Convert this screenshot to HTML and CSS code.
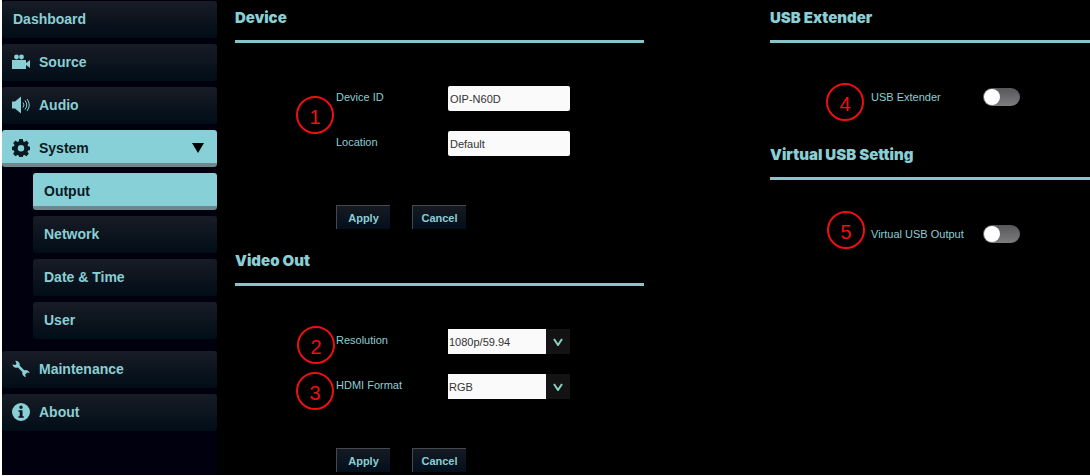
FILE: index.html
```html
<!DOCTYPE html>
<html lang="en">

<head>
    <meta charset="UTF-8">
    <meta name="viewport" content="width=device-width, initial-scale=1.0">
    <title>System - Output</title>
    <link rel="stylesheet" href="styles.css">
</head>

<body>
    <div class="app">
        <nav class="sidebar">
            <a href="#" class="nav-item">Dashboard</a>
            <a href="#" class="nav-item">
                <svg class="icon" viewBox="0 0 18 18"><circle cx="4.500" cy="4" r="2.400"/><circle cx="9.500" cy="4" r="2.400"/><path d="M0 7h14v3l4-3v8l-4-3v4H0z"/></svg>
                Source
            </a>
            <a href="#" class="nav-item">
                <svg class="icon" viewBox="0 0 18 18"><path d="M0 5.500h3l6-5v17l-6-5H0z"/><path class="wave" d="M11 6.500q2 2.500 0 5M13 4.500q3.500 4.500 0 9M15 3q4.500 6 0 12"/></svg>
                Audio
            </a>
            <a href="#" class="nav-item active">
                <svg class="icon" viewBox="0 0 18 18"><path fill-rule="evenodd" d="M7.300 0h3.400l.5 2.300 1.300.6 2-1.300 2.300 2.300-1.300 2 .6 1.400 2.300.4v3.200l-2.300.5-.6 1.400 1.300 2-2.300 2.400-2-1.300-1.300.5-.5 2.300H7.300l-.5-2.300-1.400-.5-2 1.300-2.300-2.400 1.300-2-.5-1.400L0 10.900V7.700l2-.4.500-1.400-1.300-2 2.300-2.300 2 1.300 1.300-.6zM9 6a3.200 3.200 0 1 0 0 6.400A3.200 3.200 0 0 0 9 6z"/></svg>
                System
                <svg class="arrow" viewBox="0 0 12 10"><path d="M0 0h12L6 10z"/></svg>
            </a>
            <div class="submenu">
                <a href="#" class="nav-item active">Output</a>
                <a href="#" class="nav-item">Network</a>
                <a href="#" class="nav-item">Date &amp; Time</a>
                <a href="#" class="nav-item">User</a>
            </div>
            <a href="#" class="nav-item">
                <svg class="icon" viewBox="0 0 18 18"><path d="M3.300.7A4.300 4.300 0 0 1 7.800 5.800L12.200 10.200A4.300 4.300 0 0 1 17.700 13L15.300 12.500 13.200 14.600 13.800 17.200A4.300 4.300 0 0 1 10.300 12L5.900 7.600A4.300 4.300 0 0 1 .4 4.400L3.300 5 4.500 3.600z"/></svg>
                Maintenance
            </a>
            <a href="#" class="nav-item">
                <svg class="icon" viewBox="0 0 18 18"><path fill-rule="evenodd" d="M9 0a9 9 0 1 0 0 18A9 9 0 0 0 9 0zM9 2.600a1.700 1.700 0 1 1 0 3.400 1.700 1.700 0 0 1 0-3.400zM6.500 7.200h4v6h1.300v1.500H6.400v-1.500h1.300V8.700H6.500z"/></svg>
                About
            </a>
        </nav>

        <main class="content">
            <div class="column">
                <form class="panel">
                    <h2>Device</h2>
                    <div class="row">
                        <span class="badge badge1">1</span>
                        <label for="deviceId">Device ID</label>
                        <input type="text" id="deviceId" value="OIP-N60D">
                    </div>
                    <div class="row">
                        <label for="location">Location</label>
                        <input type="text" id="location" value="Default">
                    </div>
                    <div class="buttons">
                        <button type="button">Apply</button>
                        <button type="button">Cancel</button>
                    </div>
                </form>

                <form class="panel">
                    <h2>Video Out</h2>
                    <div class="row">
                        <span class="badge badge2">2</span>
                        <label for="resolution">Resolution</label>
                        <div class="select">
                            <select id="resolution">
                                <option>1080p/59.94</option>
                            </select>
                            <svg class="chevron" viewBox="0 0 10 8"><path d="M1 1l4 6 4-6"/></svg>
                        </div>
                    </div>
                    <div class="row">
                        <span class="badge badge3">3</span>
                        <label for="hdmiFormat">HDMI Format</label>
                        <div class="select">
                            <select id="hdmiFormat">
                                <option>RGB</option>
                            </select>
                            <svg class="chevron" viewBox="0 0 10 8"><path d="M1 1l4 6 4-6"/></svg>
                        </div>
                    </div>
                    <div class="buttons">
                        <button type="button">Apply</button>
                        <button type="button">Cancel</button>
                    </div>
                </form>
            </div>

            <div class="column usb">
                <form class="panel">
                    <h2>USB Extender</h2>
                    <div class="row switch-row">
                        <span class="badge badge4">4</span>
                        <label for="usbExtender">USB Extender</label>
                        <input type="checkbox" class="toggle" id="usbExtender">
                    </div>
                </form>

                <form class="panel">
                    <h2>Virtual USB Setting</h2>
                    <div class="row switch-row">
                        <span class="badge badge5">5</span>
                        <label for="virtualUsb">Virtual USB Output</label>
                        <input type="checkbox" class="toggle" id="virtualUsb">
                    </div>
                </form>
            </div>
        </main>
    </div>
</body>

</html>
```

FILE: styles.css
```css
* {
    box-sizing: border-box;
}

body {
    margin: 0;
    padding: 0 0 1px 2px;
    background-color: #fff;
    font-family: "Liberation Sans", Arial, sans-serif;
    font-size: 11px;
    color: #8acfd5;
}

.app {
    display: flex;
    min-height: calc(100vh - 1px);
    background-color: #000;
}

/* left menu */
.sidebar {
    display: flex;
    flex-direction: column;
    gap: 6px;
    width: 215px;
    flex-shrink: 0;
    padding-top: 1px;
    background-color: #00000f;
}

.nav-item {
    display: flex;
    align-items: center;
    gap: 9px;
    height: 37px;
    padding: 0 13px 2px 11px;
    border-radius: 3px;
    background: linear-gradient(#181c26, #010d17);
    color: #8acfd5;
    font-size: 14px;
    font-weight: bold;
    text-decoration: none;
}

.nav-item.active {
    background: #88d0d8;
    border-bottom: 4px solid #6f878d;
    padding-top: 4px;
    color: #0a1a22;
}

.icon {
    width: 18px;
    height: 18px;
    margin-left: -1px;
    fill: currentColor;
}

.wave {
    fill: none;
    stroke: currentColor;
}

.arrow {
    width: 12px;
    height: 10px;
    margin-left: auto;
}

.submenu {
    display: flex;
    flex-direction: column;
    gap: 6px;
    margin: 0 0 6px 31px;
}

/* settings */
.content {
    display: grid;
    grid-template-columns: 409fr 320fr;
    column-gap: 126px;
    flex: 1;
    padding: 8px 0 0 18px;
}

.column {
    display: flex;
    flex-direction: column;
    gap: 22px;
}

.usb {
    gap: 37px;
}

h2 {
    margin: 0 0 43px;
    padding-bottom: 12px;
    border-bottom: 3px solid #86c5ca;
    font-family: Inter, "Liberation Sans", sans-serif;
    font-size: 15px;
    font-weight: 900;
    line-height: 20px;
}

.row {
    position: relative;
    display: flex;
    margin-bottom: 20px;
    padding-left: 101px;
}

.row label {
    width: 112px;
    line-height: 22px;
}

.row input[type="text"],
.select {
    width: 122px;
    height: 25px;
}

.row input[type="text"] {
    padding: 0 2px;
    border: none;
    border-radius: 2px;
    background-color: #fafafa;
    color: #333;
    font: inherit;
}

.select {
    position: relative;
}

select {
    appearance: none;
    width: 100%;
    height: 100%;
    padding: 0 24px 0 1px;
    border: none;
    border-radius: 0;
    background: linear-gradient(to left, #131313 24px, #fafafa 24px);
    color: #333;
    font: inherit;
}

.chevron {
    position: absolute;
    top: 9px;
    right: 7px;
    width: 10px;
    height: 8px;
    fill: none;
    stroke: #8acfc5;
    stroke-width: 2;
    pointer-events: none;
}

.buttons {
    display: flex;
    gap: 22px;
    margin-top: 49px;
    padding-left: 101px;
}

button {
    width: 54px;
    height: 24px;
    padding: 0;
    border: 0 solid #45484e;
    border-width: 1px 0 0 1px;
    background: linear-gradient(#161a22, #020f1d);
    color: #8acfd5;
    font: inherit;
    font-weight: bold;
}

.switch-row {
    align-items: center;
    margin-bottom: 0;
}

.toggle {
    appearance: none;
    width: 37px;
    height: 18px;
    margin: 0;
    padding: 1px;
    border-radius: 9px;
    background: linear-gradient(#58585a, #7c7c7e);
}

.toggle::before {
    content: "";
    display: block;
    width: 16px;
    height: 16px;
    border-radius: 50%;
    background-color: #fff;
}

.toggle:checked {
    background: #88d0d8;
}

.toggle:checked::before {
    margin-left: auto;
}

/* numbered callouts */
.badge {
    position: absolute;
    width: 38px;
    height: 38px;
    border: 2px solid #ee1010;
    border-radius: 50%;
    color: #ee1010;
    font-size: 20px;
    line-height: 38px;
    text-align: center;
}

.badge1 {
    top: 10px;
    left: 61px;
}

.badge2 {
    top: -3px;
    left: 62px;
}

.badge3 {
    top: -2px;
    left: 61px;
}

.badge4 {
    top: -3px;
    left: 56px;
}

.badge5 {
    top: -12px;
    left: 57px;
}
```
